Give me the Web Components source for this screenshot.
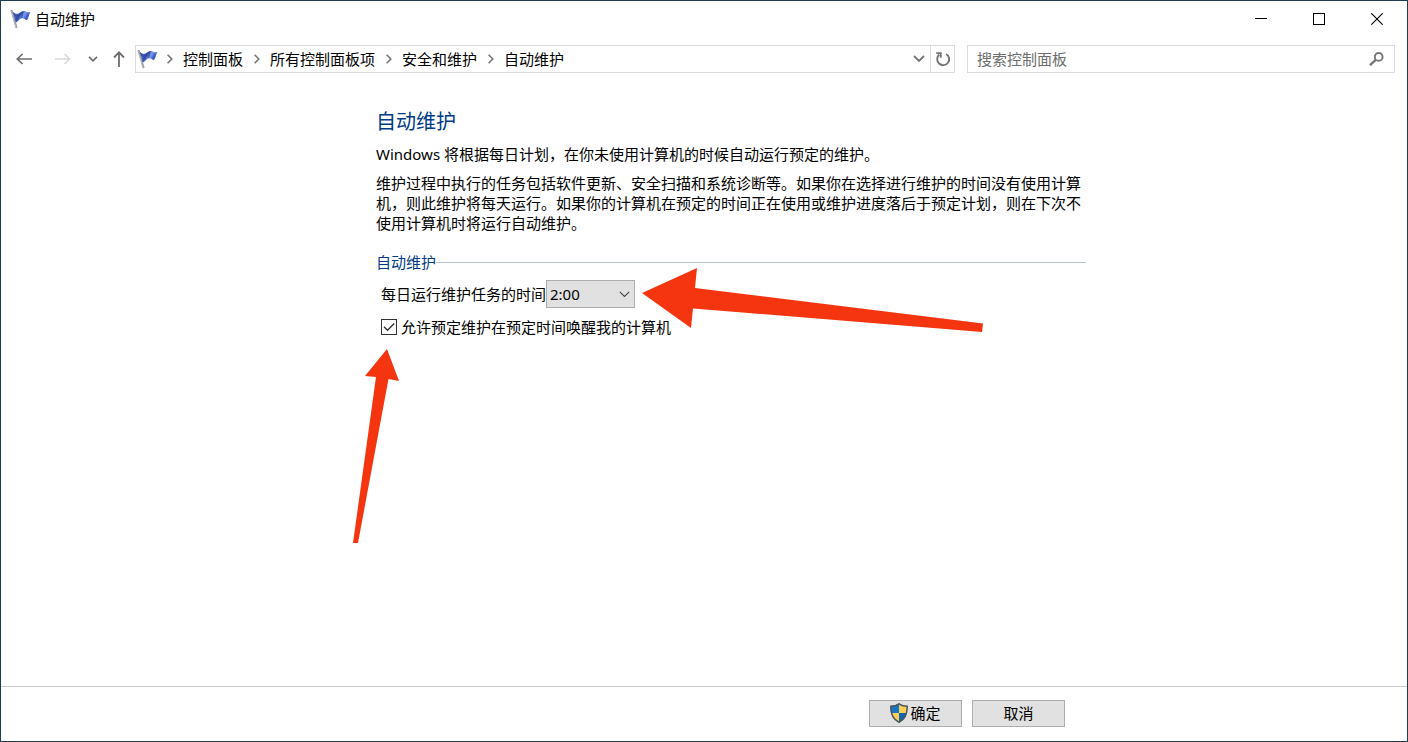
<!DOCTYPE html>
<html lang="zh-CN">
<head>
<meta charset="utf-8">
<title>自动维护</title>
<style>
  body {
    margin: 0;
    background: #fff;
    color: #000;
    font: 15px/20px "Noto Sans", "Noto Sans CJK SC", sans-serif;
  }
</style>
</head>
<body>
<app-window>
  <title-bar slot="title">自动维护</title-bar>
  <nav-bar slot="nav"></nav-bar>
  <maintenance-page></maintenance-page>
  <action-bar slot="footer"></action-bar>
</app-window>

<script>
const resetCss = `
  * { box-sizing: border-box; }
  button, input, select { font: inherit; color: inherit; margin: 0; }
  svg { display: block; }
`;

class BaseElement extends HTMLElement {
  connectedCallback() {
    if (this.shadowRoot) return;
    this.attachShadow({ mode: 'open' });
    this.shadowRoot.innerHTML = `<style>${resetCss}</style>${this.getTemplate()}`;
  }
}

class AppWindow extends BaseElement {
  getTemplate() {
    return `
      <style>
        :host {
          display: flex;
          flex-direction: column;
          min-height: 100vh;
          box-sizing: border-box;
          border: 1px solid #1f3d50;
        }
        main { flex: 1; }
      </style>
      <slot name="title"></slot>
      <slot name="nav"></slot>
      <main><slot></slot></main>
      <slot name="footer"></slot>
    `;
  }
}

class FlagIcon extends BaseElement {
  getTemplate() {
    return `
      <style>:host { display: block; flex: none; width: 22px; height: 20px; }</style>
      <svg width="22" height="20" viewBox="0 0 22 20" aria-hidden="true">
        <defs>
          <linearGradient id="cloth" x1="0" y1="0.2" x2="1" y2="0.6">
            <stop offset="0" stop-color="#1f2f80"/>
            <stop offset="0.25" stop-color="#4a68c8"/>
            <stop offset="0.42" stop-color="#2f48a8"/>
            <stop offset="0.62" stop-color="#7f9cee"/>
            <stop offset="0.8" stop-color="#3f60cc"/>
            <stop offset="1" stop-color="#2a459f"/>
          </linearGradient>
        </defs>
        <path d="M1.8 2.4C3.5 3 4.5 4.6 6.5 4.8C9.5 5 10.5 2 13.5 1.9C16 1.8 17.5 3.8 20.4 3.2C18.6 5.2 19 8.6 17 11C15 11 14 9 11.5 9.4C9 9.9 8.6 12.8 5.2 13.4Z" fill="url(#cloth)"/>
        <path d="M4.5 6C6.5 8.5 8.5 5.5 10 6.5M12.8 3C11.5 5.5 12.8 6.5 11.5 9" fill="none" stroke="#23388c" stroke-width="0.8"/>
        <path d="M1.4 1L6.6 19" fill="none" stroke="#8d929c" stroke-width="2"/>
        <path d="M1.2 1.8L6.2 18.8" fill="none" stroke="#d2d6dc" stroke-width="0.6"/>
      </svg>
    `;
  }
}

class TitleBar extends BaseElement {
  getTemplate() {
    return `
      <style>
        :host { display: flex; height: 36px; align-items: center; padding: 0 1px 0 9px; }
        h1 { flex: 1; margin: 0 0 0 3px; font-size: 15px; font-weight: 400; }
        .caption { display: flex; align-self: stretch; }
        button {
          width: 58px; padding: 0; border: 0; background: none;
          display: grid; place-items: center;
        }
        button:hover { background: #e5e5e5; }
        button.close:hover { background: #e81123; color: #fff; }
      </style>
      <flag-icon></flag-icon>
      <h1><slot></slot></h1>
      <div class="caption">
        <button type="button" aria-label="最小化">
          <svg width="12" height="12" stroke="currentColor"><path d="M0 5.5H12"/></svg>
        </button>
        <button type="button" aria-label="最大化">
          <svg width="12" height="12" stroke="currentColor" fill="none"><rect x=".5" y=".5" width="11" height="11"/></svg>
        </button>
        <button type="button" class="close" aria-label="关闭">
          <svg width="12" height="12" stroke="currentColor" stroke-width="1.1"><path d="M.3 .3L11.7 11.7M11.7 .3L.3 11.7"/></svg>
        </button>
      </div>
    `;
  }
}

class NavBar extends BaseElement {
  getTemplate() {
    return `
      <style>
        :host { display: flex; align-items: center; padding: 8px 12px 8px 3px; }
        button {
          flex: none; height: 26px; padding: 0; border: 0; background: none; color: #6e6e6e;
          display: grid; place-items: center;
        }
        .wide { width: 39px; }
        .narrow { width: 21px; }
        .up { width: 32px; }
        button:disabled { color: #d8d8d8; }
        svg { fill: none; stroke: currentColor; }
        address-bar { flex: 1; margin-right: 12px; }
        search-box { flex: 0 1 428px; }
      </style>
      <button class="wide" type="button" aria-label="后退">
        <svg width="16" height="12" stroke-width="1.7"><path d="M6.5 1L1.3 6L6.5 11M1.3 6H16"/></svg>
      </button>
      <button class="wide" type="button" aria-label="前进" disabled>
        <svg width="16" height="12" stroke-width="1.5"><path d="M9.5 1L14.7 6L9.5 11M14.7 6H0"/></svg>
      </button>
      <button class="narrow" type="button" aria-label="最近位置">
        <svg width="10" height="6" stroke-width="1.7"><path d="M1 .8L5 4.8L9 .8"/></svg>
      </button>
      <button class="up" type="button" aria-label="上移">
        <svg width="12" height="16" stroke-width="1.8"><path d="M1 6.5L6 1.4L11 6.5M6 1.4V16"/></svg>
      </button>
      <address-bar></address-bar>
      <search-box></search-box>
    `;
  }
}

class AddressBar extends BaseElement {
  getTemplate() {
    const crumbs = ['控制面板', '所有控制面板项', '安全和维护', '自动维护'];
    return `
      <style>
        :host { display: flex; height: 28px; border: 1px solid #d9d9d9; box-sizing: border-box; min-width: 0; }
        nav { flex: 1; display: flex; align-items: center; min-width: 0; padding-left: 1px; white-space: nowrap; overflow: hidden; }
        flag-icon { width: 19px; }
        ol { display: flex; margin: 0; padding: 0; list-style: none; }
        li { display: flex; align-items: center; }
        li svg { width: 27px; height: 10px; }
        a { color: inherit; text-decoration: none; }
        button {
          width: 22px; padding: 0; border: 0; background: none; color: #6e6e6e;
          display: grid; place-items: center;
        }
        .refresh { border-left: 1px solid #d9d9d9; width: 24px; }
        svg { fill: none; stroke: #757575; }
      </style>
      <nav aria-label="地址">
        <flag-icon></flag-icon>
        <ol>
          ${crumbs.map(name => `
            <li>
              <svg viewBox="-11 0 27 10" stroke-width="1.6" aria-hidden="true"><path d="M.6 .8L4.8 5L.6 9.2"/></svg>
              <a href="#">${name}</a>
            </li>`).join('')}
        </ol>
      </nav>
      <button type="button" aria-label="以前的位置">
        <svg width="12" height="8" stroke-width="1.9"><path d="M1 1L6 6L11 1"/></svg>
      </button>
      <button type="button" class="refresh" aria-label="刷新">
        <svg width="16" height="16" stroke-width="1.9">
          <path d="M11.2 3A6 6 0 1 1 4.3 3.6"/>
          <path d="M1.2 2.2H5.8V6.8" stroke-width="1.8"/>
        </svg>
      </button>
    `;
  }
}

class SearchBox extends BaseElement {
  getTemplate() {
    return `
      <style>
        :host { display: flex; height: 28px; align-items: center; border: 1px solid #d9d9d9; box-sizing: border-box; padding: 0 10px 0 9px; }
        input { flex: 1; min-width: 0; height: 26px; border: 0; padding: 0; outline: 0; background: none; }
        input::placeholder { color: #6d6d6d; opacity: 1; }
      </style>
      <input type="text" aria-label="搜索" placeholder="搜索控制面板">
      <svg width="15" height="14" fill="none" stroke="#757575" aria-hidden="true">
        <circle cx="9.7" cy="4.9" r="3.9" stroke-width="1.9"/>
        <path d="M6.8 7.8L1 13.2" stroke-width="2.3"/>
      </svg>
    `;
  }
}

class MaintenancePage extends BaseElement {
  getTemplate() {
    return `
      <style>
        :host { display: block; padding: 29px 0 0 375px; }
        article { max-width: 710px; }
        h2 { margin: 0 0 10px; font-size: 20px; line-height: 24px; font-weight: 400; color: #003b86; }
        p { margin: 0 0 9px; }
        schedule-group { margin-top: 19px; }
      </style>
      <article>
        <h2>自动维护</h2>
        <p>Windows 将根据每日计划，在你未使用计算机的时候自动运行预定的维护。</p>
        <p>维护过程中执行的任务包括软件更新、安全扫描和系统诊断等。如果你在选择进行维护的时间没有使用计算机，则此维护将每天运行。如果你的计算机在预定的时间正在使用或维护进度落后于预定计划，则在下次不使用计算机时将运行自动维护。</p>
        <schedule-group></schedule-group>
      </article>
    `;
  }
}

class ScheduleGroup extends BaseElement {
  getTemplate() {
    return `
      <style>
        :host { display: block; position: relative; }
        .heading { display: flex; align-items: center; color: #003b86; }
        h3 { margin: 0; font-size: 15px; font-weight: 400; }
        hr { flex: 1; margin: 0; border: 0; border-top: 1px solid #b9c6cc; }
        .row { display: flex; align-items: center; min-height: 22px; padding-left: 5px; margin-top: 8px; }
        .stack { display: grid; align-items: center; }
        .stack > * { grid-area: 1 / 1; }
        .stack svg { justify-self: end; pointer-events: none; fill: none; }
        select {
          appearance: none; width: 89px; height: 28px; padding: 0 3px;
          border: 1px solid #adadad; border-radius: 0; background: #e1e1e1;
        }
        .stack.time svg { margin-right: 5px; }
        .check { margin-right: 4px; }
        input {
          appearance: none; width: 16px; height: 16px;
          border: 1px solid #333; background: #fff;
        }
        input:not(:checked) + svg { visibility: hidden; }
        /* the pointers lie over the form and leave it usable */
        .pointers { position: absolute; left: -26px; top: 8px; pointer-events: none; fill: #f53510; }
      </style>
      <div class="heading"><h3>自动维护</h3><hr></div>
      <div class="row">
        <label for="time">每日运行维护任务的时间</label>
        <span class="stack time">
          <select id="time">
            <option>1:00</option>
            <option selected>2:00</option>
            <option>3:00</option>
          </select>
          <svg width="11" height="7" stroke="#444" stroke-width="1.1"><path d="M.8 .8L5.5 5.5L10.2 .8"/></svg>
        </span>
      </div>
      <div class="row">
        <span class="stack check">
          <input type="checkbox" id="wake" checked>
          <svg width="16" height="16" stroke="#333" stroke-width="1.4"><path d="M3 7.8L6.5 11.3L13.2 4.6"/></svg>
        </span>
        <label for="wake">允许预定维护在预定时间唤醒我的计算机</label>
      </div>
      <svg class="pointers" width="640" height="290" viewBox="350 260 640 290" aria-hidden="true">
        <path d="M642 293L697 268L695 288L983 323.5L982 332L693 308.5L691 328Z"/>
        <path d="M387 349L399 381L388.5 379L358 543H353L376 377L365 376Z"/>
      </svg>
    `;
  }
}

class ActionBar extends BaseElement {
  getTemplate() {
    return `
      <style>
        :host { display: block; border-top: 1px solid #c9c9c9; padding: 13px 0 14px 375px; }
        .buttons { display: flex; justify-content: flex-end; gap: 10px; max-width: 710px; padding-right: 21px; }
        button {
          display: flex; align-items: center; justify-content: center; gap: 2px;
          width: 93px; height: 27px; padding: 0 0 1px;
          border: 1px solid #adadad; background: #e1e1e1;
        }
      </style>
      <div class="buttons">
        <button type="button">
          <svg width="18" height="20" viewBox="0 0 18 20" aria-hidden="true">
            <clipPath id="shield"><path d="M9 .6C6.8 2.2 4 3 .6 3C.4 10.5 1.8 16.3 9 19.4C16.2 16.3 17.6 10.5 17.4 3C14 3 11.2 2.2 9 .6Z"/></clipPath>
            <g clip-path="url(#shield)">
              <path fill="#1976c5" d="M0 0H9V10H0Z"/>
              <path fill="#fbd055" d="M9 0H18V10H9Z"/>
              <path fill="#fbd055" d="M0 10H9V20H0Z"/>
              <path fill="#1464ae" d="M9 10H18V20H9Z"/>
            </g>
            <path fill="none" stroke="#4a555e" stroke-width="1.5" d="M9 .8C6.8 2.4 4 3.2 .8 3.2C.6 10.5 2 16.1 9 19.2C16 16.1 17.4 10.5 17.2 3.2C14 3.2 11.2 2.4 9 .8Z"/>
          </svg>
          确定
        </button>
        <button type="button">取消</button>
      </div>
    `;
  }
}

customElements.define('flag-icon', FlagIcon);
customElements.define('title-bar', TitleBar);
customElements.define('address-bar', AddressBar);
customElements.define('search-box', SearchBox);
customElements.define('nav-bar', NavBar);
customElements.define('schedule-group', ScheduleGroup);
customElements.define('maintenance-page', MaintenancePage);
customElements.define('action-bar', ActionBar);
customElements.define('app-window', AppWindow);
</script>
</body>
</html>
